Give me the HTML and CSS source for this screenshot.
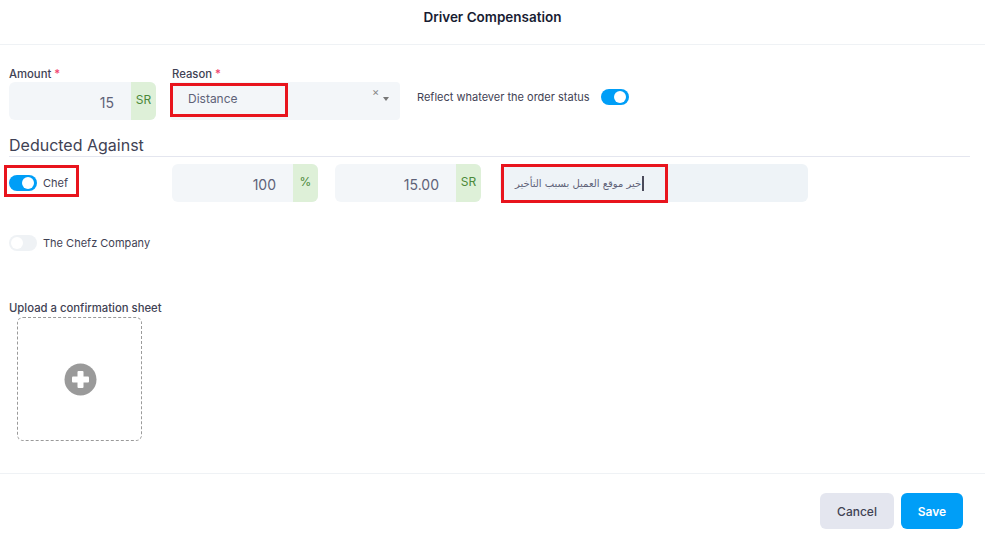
FILE: index.html
```html
<!DOCTYPE html>
<html>
<head>
<meta charset="utf-8">
<link rel="stylesheet" href="styles.css">
</head>
<body>
<div class="modal">
  <div class="header"><h1 class="title">Driver Compensation</h1></div>
  <div class="content">
    <div class="row1">
      <div class="field amount">
        <label class="label">Amount <span class="req">*</span></label>
        <div class="group">
          <div class="input num">15</div>
          <div class="addon">SR</div>
        </div>
      </div>
      <div class="field reason">
        <label class="label">Reason <span class="req">*</span></label>
        <div class="select">
          <span class="sel-value">Distance</span>
          <span class="sel-clear">×</span>
          <span class="sel-arrow"></span>
          <span class="mark mark-reason"></span>
        </div>
      </div>
      <div class="reflect">
        <span class="reflect-text">Reflect whatever the order status</span>
        <span class="toggle on"><span class="knob"></span></span>
      </div>
    </div>

    <h2 class="section">Deducted Against</h2>

    <div class="row2">
      <div class="check">
        <span class="toggle on"><span class="knob"></span></span>
        <span class="check-text">Chef</span>
        <span class="mark mark-chef"></span>
      </div>
      <div class="group pct">
        <div class="input num">100</div>
        <div class="addon">%</div>
      </div>
      <div class="group sr">
        <div class="input num">15.00</div>
        <div class="addon">SR</div>
      </div>
      <div class="note">
        <span class="note-text" dir="rtl">خير موقع العميل بسبب التأخير</span><span class="caret"></span>
        <span class="mark mark-note"></span>
      </div>
    </div>

    <div class="row3">
      <span class="toggle off"><span class="knob"></span></span>
      <span class="check-text">The Chefz Company</span>
    </div>

    <div class="upload">
      <div class="label up-label">Upload a confirmation sheet</div>
      <div class="dropzone">
        <svg width="33" height="33" viewBox="0 0 33 33" class="plus">
          <circle cx="16.5" cy="16.5" r="16" fill="#9a9a9a"/>
          <rect x="8" y="13.5" width="17" height="6" rx="1" fill="#fff"/>
          <rect x="13.5" y="8" width="6" height="17" rx="1" fill="#fff"/>
        </svg>
      </div>
    </div>
  </div>
  <div class="footer">
    <button class="btn cancel">Cancel</button>
    <button class="btn save">Save</button>
  </div>
</div>
</body>
</html>
```
FILE: styles.css
```css
* { box-sizing: border-box; }
html, body { margin: 0; padding: 0; background: #fff; }
body {
  font-family: Inter, "Noto Sans", "Liberation Sans", sans-serif;
  color: #3f4254;
  width: 985px;
  height: 543px;
  overflow: hidden;
}
.header {
  height: 45px;
  border-bottom: 1px solid #eff2f5;
  padding-top: 8px;
}
.title {
  margin: 0;
  text-align: center;
  font-size: 13.5px;
  line-height: 18px;
  font-weight: 600;
  color: #181c32;
}
.content { padding: 0 9px; height: 428px; }
.row1 { display: flex; align-items: flex-start; padding-top: 22px; }
.label {
  display: block;
  font-size: 11.3px;
  line-height: 14px;
  font-weight: 500;
  color: #3f4254;
  margin-bottom: 1px;
}
.req { color: #f1416c; }
.field.amount { width: 147px; }
.field.reason { margin-left: 14px; width: 230px; }
.field.reason .label { padding-left: 2px; }
.group {
  display: flex;
  height: 38px;
  border-radius: 6px;
  overflow: hidden;
  background: #f3f6f9;
}
.input {
  flex: 1;
  font-size: 14px;
  color: #5e6278;
  display: flex;
  align-items: center;
}
.input.num { justify-content: flex-end; padding-right: 17px; padding-top: 2px; }
.addon {
  width: 25px;
  background: #def0d8;
  color: #4c8a3a;
  font-size: 12px;
  display: flex;
  align-items: center;
  justify-content: center;
  padding-bottom: 4px;
}
.select {
  position: relative;
  height: 38px;
  background: #f3f6f9;
  border-radius: 4px;
  display: flex;
  align-items: center;
}
.sel-value { font-size: 12px; color: #5e6278; margin-left: 18px; margin-top: -6px; }
.sel-clear {
  position: absolute; left: 202px; top: 4px;
  font-size: 11px; color: #888; line-height: 12px;
}
.sel-arrow {
  position: absolute; left: 213px; top: 15px;
  width: 0; height: 0;
  border-left: 3px solid transparent;
  border-right: 3px solid transparent;
  border-top: 4px solid #777;
}
.mark {
  position: absolute;
  border: 3px solid #e8141d;
  pointer-events: none;
}
.mark-reason { left: 0; top: 1px; width: 118px; height: 34px; }
.reflect {
  margin-left: 17px;
  display: flex;
  align-items: center;
  height: 22px;
  margin-top: 19px;
}
.reflect-text { font-size: 11px; font-weight: 400; color: #3f4254; margin-right: 11px; }
.toggle {
  position: relative;
  display: inline-block;
  width: 28px;
  height: 16px;
  border-radius: 8px;
  flex: none;
}
.toggle.on { background: #009ef7; }
.toggle.off { background: #eff2f5; }
.knob {
  position: absolute;
  top: 2px;
  width: 12px; height: 12px;
  border-radius: 50%;
  background: #fff;
}
.toggle.on .knob { right: 3px; }
.toggle.off .knob { left: 2px; }
.section {
  margin: 15px 6px 0 0;
  font-size: 16px;
  font-weight: 400;
  line-height: 20px;
  color: #3f4254;
  padding-bottom: 1px;
  border-bottom: 1px solid #e4e6ef;
}
.row2 { display: flex; align-items: center; margin-top: 7px; }
.check {
  position: relative;
  width: 163px;
  display: flex;
  align-items: center;
  height: 38px;
}
.check-text { font-size: 11px; font-weight: 400; margin-left: 6px; color: #3f4254; }
.mark-chef { left: -5px; top: 1px; width: 75px; height: 32px; }
.group.pct { width: 146px; }
.group.sr { width: 146px; margin-left: 17px; }
.note {
  position: relative;
  margin-left: 19px;
  width: 308px;
  height: 38px;
  background: #eef3f7;
  border-radius: 6px;
  display: flex;
  align-items: center;
  padding-left: 15px;
}
.note-text {
  font-family: "DejaVu Sans", sans-serif;
  font-size: 10px;
  color: #5e6278;
  letter-spacing: -0.2px;
}
.caret {
  display: inline-block;
  width: 2px;
  height: 15px;
  background: #4a4a5a;
  margin-left: 1px;
}
.mark-note { left: 1px; top: 0; width: 167px; height: 39px; }
.row3 {
  display: flex;
  align-items: center;
  margin-top: 33px;
  height: 16px;
}
.upload { margin-top: 50px; }
.up-label { margin-bottom: 2px; }
.dropzone {
  margin-left: 8px;
  width: 125px;
  height: 124px;
  border: 1px dashed #9a9a9a;
  border-radius: 6px;
  display: flex;
  align-items: center;
  justify-content: center;
}
.plus { display: block; margin-left: 1px; }
.footer {
  border-top: 1px solid #eff2f5;
  height: 70px;
  display: flex;
  justify-content: flex-end;
  align-items: flex-start;
  padding-top: 19px;
  padding-right: 22px;
  gap: 7px;
}
.btn {
  border: 0;
  height: 36px;
  border-radius: 6px;
  font-family: Inter, "Noto Sans", sans-serif;
  font-size: 12px;
  cursor: pointer;
}
.cancel { width: 74px; background: #e4e6ef; color: #3f4254; font-weight: 500; }
.save { width: 62px; background: #009ef7; color: #fff; font-weight: 600; }
```
